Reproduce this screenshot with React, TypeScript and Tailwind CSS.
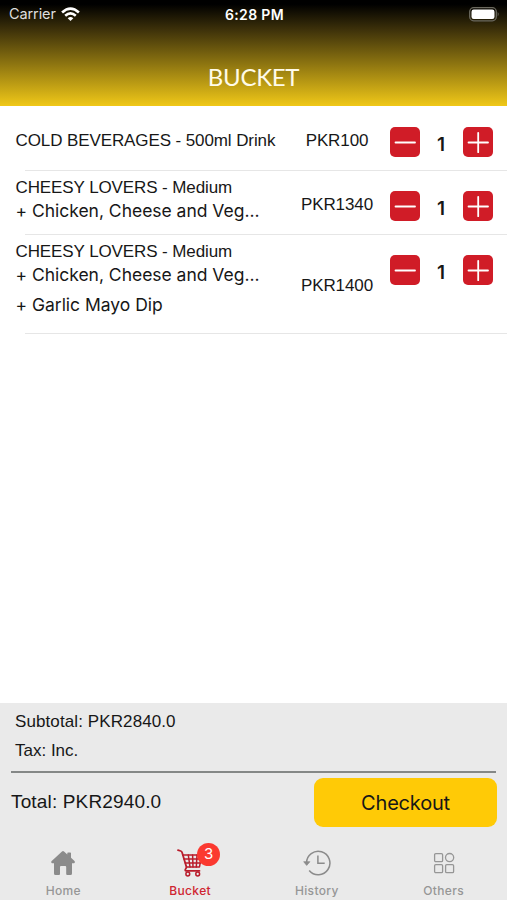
import type { ReactNode } from 'react'
import clsx from 'clsx'

interface BucketItem {
  name: string
  extras: string[]
  price: string
  quantity: number
  rowClass: string
  nameClass: string
  priceClass: string
  stepperClass: string
}

const items: BucketItem[] = [
  {
    name: 'COLD BEVERAGES - 500ml Drink',
    extras: [],
    price: 'PKR100',
    quantity: 1,
    rowClass: 'h-[66px]',
    nameClass: 'pt-[26px]',
    priceClass: 'pt-[26px]',
    stepperClass: 'pt-[21.5px]'
  },
  {
    name: 'CHEESY LOVERS - Medium',
    extras: ['+ Chicken, Cheese and Veg...'],
    price: 'PKR1340',
    quantity: 1,
    rowClass: 'h-16',
    nameClass: 'pt-[7px]',
    priceClass: 'pt-[24px]',
    stepperClass: 'pt-[19.5px]'
  },
  {
    name: 'CHEESY LOVERS - Medium',
    extras: ['+ Chicken, Cheese and Veg...', '+ Garlic Mayo Dip'],
    price: 'PKR1400',
    quantity: 1,
    rowClass: 'h-[99px]',
    nameClass: 'pt-[7px]',
    priceClass: 'pt-[41px]',
    stepperClass: 'pt-5'
  }
]

function WifiIcon() {
  return (
    <svg width="19" height="15" viewBox="0 0 19 15" fill="none" stroke="#fff" strokeWidth="2.6">
      <path d="M1.1 5.5 Q9.5 -2.2 17.9 5.5" />
      <path d="M4.2 8.8 Q9.5 4.1 14.8 8.8" />
      <path d="M9.5 14 L6.7 11.2 Q9.5 8.9 12.3 11.2 Z" fill="#fff" stroke="none" />
    </svg>
  )
}

function BatteryIcon() {
  return (
    <svg width="31" height="15" viewBox="0 0 31 15">
      <rect x="0.7" y="0.7" width="26.6" height="13.1" rx="4" fill="none" stroke="#6b695f" strokeWidth="1.3" />
      <rect x="2.5" y="2.5" width="23" height="9.5" rx="2.2" fill="#fff" />
      <path d="M28.7 5 Q30.6 7.2 28.7 9.5 Z" fill="#6b695f" />
    </svg>
  )
}

function HomeIcon() {
  return (
    <svg width="26" height="26" viewBox="0 0 26 26" fill="#8b8b8b">
      <path d="M12 1.4 Q13 .5 14 1.4 L17.3 4.4 V3.2 Q17.3 2.5 18 2.5 H20.3 Q21 2.5 21 3.2 V7.8 L24.5 11 Q25.4 12 24.5 12.9 Q23.9 13.4 23 13.3 H22 V23.5 Q22 25 20.5 25 H17.2 Q16.2 25 16.2 24 V17 Q16.2 16 15.2 16 H11 Q10 16 10 17 V24 Q10 25 9 25 H5.5 Q4 25 4 23.5 V13.3 H2.8 Q1.8 13.3 1.4 12.7 Q.8 11.9 1.7 11 Z" />
    </svg>
  )
}

function CartIcon() {
  return (
    <svg width="26" height="28" viewBox="0 0 26 28" fill="none" stroke="#b91c2b" strokeWidth="1.5" strokeLinecap="round" strokeLinejoin="round">
      <path d="M1 1.2 L3.7 2 Q4.7 2.3 5.1 3.6 L9.3 17.6 Q9.6 18.8 8.8 19.6 Q7.5 21.8 9.2 21.8 H22.5" strokeWidth="1.8" />
      <path d="M5.8 6 H24.5 L22.5 18 H9.5" />
      <path d="M7 10 H23.8 M8.3 14 H23.2 M11.3 6 L13 18 M15.6 6 L16 18 M20 6 L19.3 18" />
      <circle cx="10.8" cy="25" r="1.9" />
      <circle cx="20.7" cy="25" r="1.9" />
    </svg>
  )
}

function HistoryIcon() {
  return (
    <svg width="28" height="26" viewBox="0 0 28 26" fill="none" stroke="#8b8b8b" strokeWidth="1.5">
      <path d="M3.5 13 A11.7 11.7 0 1 1 6.2 20.5" />
      <path d="M.7 11.7 H6.9 L3.7 15.4 Z" fill="#8b8b8b" strokeWidth="0.7" />
      <path d="M14.9 5.5 V13.3 H21.7" />
    </svg>
  )
}

function OthersIcon() {
  return (
    <svg width="22" height="22" viewBox="0 0 22 22" fill="none" stroke="#969696" strokeWidth="1.3">
      <rect x="1.6" y="1.6" width="8" height="8" rx="1.2" />
      <circle cx="16.6" cy="5.6" r="4.1" />
      <rect x="1.6" y="12.6" width="8" height="8" rx="1.2" />
      <rect x="12.6" y="12.6" width="8" height="8" rx="1.2" />
    </svg>
  )
}

function StepButton({ type }: { type: 'minus' | 'plus' }) {
  return (
    <button className="flex h-[30px] w-[30px] items-center justify-center rounded-[5px] bg-[#d01c27]">
      <svg width="30" height="30" viewBox="0 0 30 30" stroke="#fff" strokeWidth="1.8" strokeLinecap="round">
        <path d={type === 'plus' ? 'M5.5 15.5 H25 M15.2 5.8 V25.2' : 'M5.5 15.5 H25'} />
      </svg>
    </button>
  )
}

function BucketRow({ item }: { item: BucketItem }) {
  return (
    <li className={clsx('flex flex-col', item.rowClass)}>
      <div className="flex min-h-0 flex-1 pl-[15.5px]">
        <div className={clsx('w-[274px] whitespace-nowrap', item.nameClass)}>
          <div className="text-[17px] leading-5 tracking-[-0.1px]">{item.name}</div>
          {item.extras.map((extra, i) => (
            <div
              key={extra}
              className={clsx("font-['Inter'] text-[17.5px] leading-6 tracking-[-0.02px]", i === 0 ? 'pt-px' : 'pt-[6px]')}
            >
              {extra}
            </div>
          ))}
        </div>
        <div className={clsx('w-[95px] text-center text-[17px] leading-5 tracking-[-0.1px]', item.priceClass)}>
          {item.price}
        </div>
        <div className={clsx('ml-[5px] flex', item.stepperClass)}>
          <StepButton type="minus" />
          <span className="w-[43px] pt-[6px] text-center font-['Inter'] text-[19px] leading-6 font-semibold">
            {item.quantity}
          </span>
          <StepButton type="plus" />
        </div>
      </div>
      <div className="ml-[25px] h-px bg-[#e6e6e6]" />
    </li>
  )
}

function TabItem({ label, icon, active = false, badge }: { label: string; icon: ReactNode; active?: boolean; badge?: number }) {
  return (
    <button className="flex flex-1 flex-col items-center">
      <span className="relative flex h-[33px] items-center justify-center">
        {icon}
        {badge && (
          <span className="absolute top-[-3px] left-[20px] flex h-[23px] w-[23px] items-center justify-center rounded-full bg-[#fb3930] font-['Inter'] text-[15px] text-white">
            {badge}
          </span>
        )}
      </span>
      <span
        className={clsx(
          "mt-1 font-['Inter'] text-[12px] leading-4 font-medium tracking-[0.35px]",
          active ? 'text-[#cf2531]' : 'text-[#969696]'
        )}
      >
        {label}
      </span>
    </button>
  )
}

export default function App() {
  return (
    <div className="flex h-[900px] w-[507px] flex-col overflow-hidden bg-white font-['Liberation_Sans',sans-serif] text-[#171717]">
      <header className="h-[105.5px] bg-[linear-gradient(to_bottom,#000_4%,#3d310a_28%,#f0c818_100%)]">
        <div className="grid h-7 grid-cols-3 items-center pr-[7px] pl-[9px] font-['Inter'] text-white">
          <div className="flex items-center gap-[5px]">
            <span className="text-[14.5px] tracking-[-0.1px] text-[#dedede]">Carrier</span>
            <WifiIcon />
          </div>
          <div className="text-center text-[14px] font-semibold tracking-[0.35px]">6:28 PM</div>
          <div className="flex justify-end">
            <BatteryIcon />
          </div>
        </div>
        <h1 className="pt-[34px] text-center font-['Lato'] text-[24px] leading-[30px] tracking-[-0.3px] text-[#fffbe8]">BUCKET</h1>
      </header>

      <ul className="mt-[-0.5px] flex-1">
        {items.map((item) => (
          <BucketRow key={item.price} item={item} />
        ))}
      </ul>

      <footer className="flex h-[197px] flex-col bg-[#eaeaea]">
        <div className="mx-[11px] h-[70px] border-b-2 border-[#858887] pt-[9px] pl-1 text-[17px] leading-5">
          <div className="tracking-[0.1px]">Subtotal: PKR2840.0</div>
          <div className="pt-[9px]">Tax: Inc.</div>
        </div>
        <div className="flex h-[59px] items-center justify-between pr-[10px] pl-[11px]">
          <div className="text-[19px] tracking-[0.15px]">Total: PKR2940.0</div>
          <button className="h-[49px] w-[183px] rounded-[9px] bg-[#ffca06] font-['Inter'] text-[20px] tracking-[-0.2px]">
            Checkout
          </button>
        </div>
        {/* Bottom tabs */}
        <nav className="flex pt-[14px]">
          <TabItem label="Home" icon={<HomeIcon />} />
          <TabItem label="Bucket" icon={<CartIcon />} active badge={3} />
          <TabItem label="History" icon={<HistoryIcon />} />
          <TabItem label="Others" icon={<OthersIcon />} />
        </nav>
      </footer>
    </div>
  )
}
